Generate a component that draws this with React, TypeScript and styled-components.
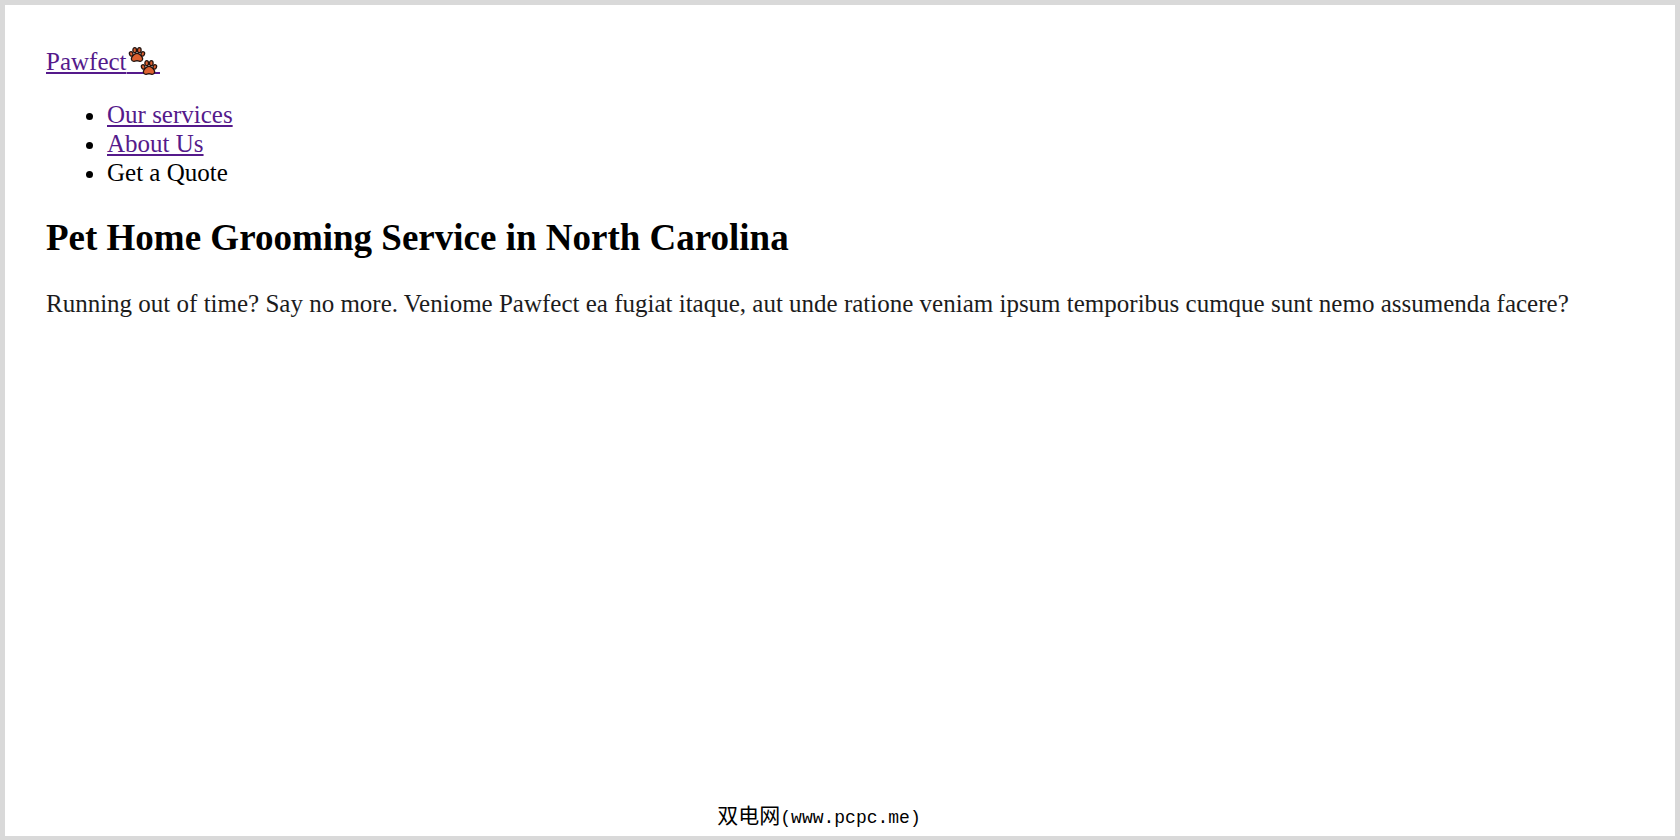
import React from "react";
import styled, { createGlobalStyle } from "styled-components";

const GlobalStyle = createGlobalStyle`
  * { box-sizing: border-box; }
  body {
    margin: 0;
    background: #fff;
    color: #000;
    font: 25px/29px "Liberation Serif", "Times New Roman", serif;
  }
`;

const Page = styled.div`
  display: flex;
  flex-direction: column;
  min-height: 100vh;
  padding: 42px 41px 5px;
  border: 5px solid #d9d9d9;
  border-bottom-width: 4px;
`;

const TextLink = styled.a`
  color: #551a8b;
  text-decoration: underline;
  text-decoration-thickness: 2px;
  text-underline-offset: 2px;
`;

const Paws = styled.svg`
  width: 33px;
  height: 29px;
  vertical-align: -6px;
`;

const NavList = styled.ul`
  margin: 24px 0 29px;
  padding-left: 61px;
`;

const Main = styled.main`
  flex: 1;
`;

const Title = styled.h1`
  margin: 0 0 29px;
  font-size: 37px;
  line-height: 44px;
`;

const Lead = styled.p`
  margin: 0;
  color: #1c1c1c;
`;

const Footer = styled.footer`
  display: flex;
  align-items: baseline;
  justify-content: center;
  padding-right: 42px;
  font: 18px/26px "Liberation Mono", monospace;
`;

const SiteName = styled.span`
  font: 21px/26px "Noto Sans CJK SC", sans-serif;
`;

function Paw() {
  return (
    <g stroke="#24130e" strokeWidth="1.3" fill="#dd6030">
      <path d="M8 6.300c2.400 0 3.200 1.500 4.400 2.800 2.200 2.400 1.300 5.400-1.500 5.200L8 13.700l-2.900.6c-2.800.2-3.700-2.800-1.500-5.200C4.800 7.800 5.600 6.300 8 6.300z" />
      <ellipse cx="2.200" cy="6.900" rx="1.700" ry="2.300" transform="rotate(-20 2.200 6.900)" />
      <ellipse cx="13.800" cy="6.900" rx="1.700" ry="2.300" transform="rotate(20 13.800 6.900)" />
      <ellipse cx="5.700" cy="3.200" rx="1.800" ry="2.500" />
      <ellipse cx="10.300" cy="3.200" rx="1.800" ry="2.500" />
    </g>
  );
}

export default function App() {
  return (
    <>
      <GlobalStyle />
      <Page>
        <header>
          <TextLink href="#home">
            Pawfect
            <Paws viewBox="0 0 33 29" aria-hidden="true">
              <path d="M0 26H33" stroke="#551a8b" strokeWidth="2" />
              <g transform="translate(2 0)"><Paw /></g>
              <g transform="translate(14 13)"><Paw /></g>
            </Paws>
          </TextLink>
          <nav>
            <NavList>
              <li><TextLink href="#services">Our services</TextLink></li>
              <li><TextLink href="#about">About Us</TextLink></li>
              <li>Get a Quote</li>
            </NavList>
          </nav>
        </header>
        <Main>
          <Title>Pet Home Grooming Service in North Carolina</Title>
          <Lead>
            Running out of time? Say no more. Veniome Pawfect ea fugiat itaque, aut unde ratione
            veniam ipsum temporibus cumque sunt nemo assumenda facere?
          </Lead>
        </Main>
        <Footer>
          <SiteName>双电网</SiteName>(www.pcpc.me)
        </Footer>
      </Page>
    </>
  );
}
